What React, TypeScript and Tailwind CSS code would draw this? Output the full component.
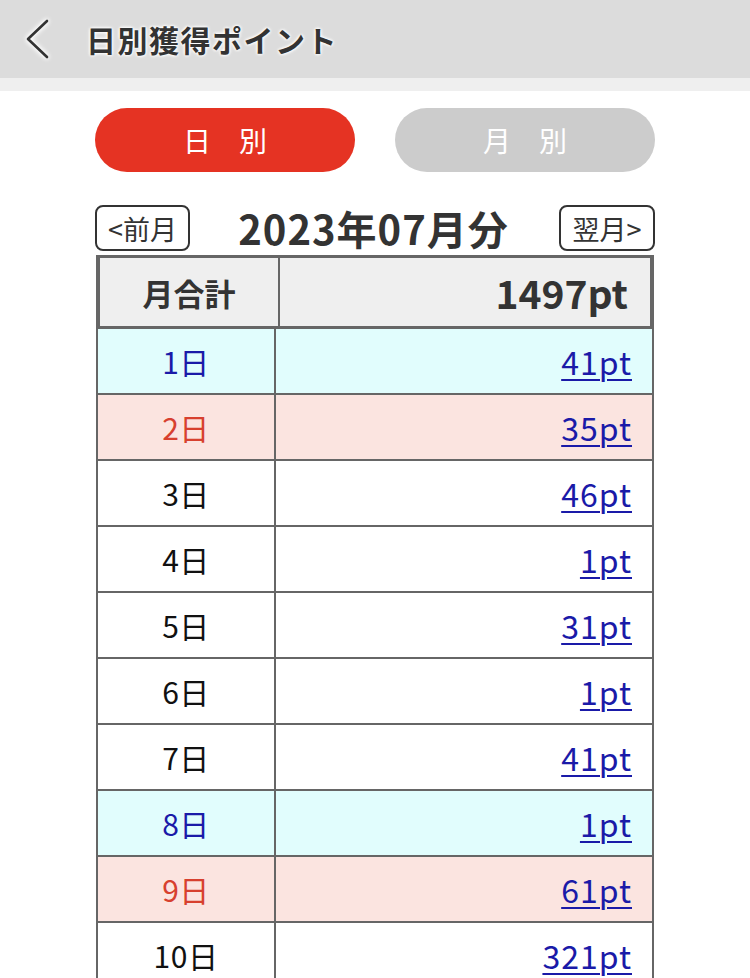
import React from "react";

const rows: { d: string; v: string; t: "blue" | "red" | "normal" }[] = [
  { d: "1日", v: "41pt", t: "blue" },
  { d: "2日", v: "35pt", t: "red" },
  { d: "3日", v: "46pt", t: "normal" },
  { d: "4日", v: "1pt", t: "normal" },
  { d: "5日", v: "31pt", t: "normal" },
  { d: "6日", v: "1pt", t: "normal" },
  { d: "7日", v: "41pt", t: "normal" },
  { d: "8日", v: "1pt", t: "blue" },
  { d: "9日", v: "61pt", t: "red" },
  { d: "10日", v: "321pt", t: "normal" },
];

export default function App() {
  const font = { fontFamily: '"Noto Sans CJK JP", "Noto Sans", sans-serif' };
  return (
    <div className="w-[750px] h-[978px] overflow-hidden bg-white" style={font}>
      <div className="h-[78px] bg-[#dcdcdc] flex items-center">
        <svg width="40" height="50" viewBox="0 0 40 50" className="ml-[16px] mt-[2px]" style={{ filter: "drop-shadow(0 0 2px #fff) drop-shadow(0 0 2px #fff)" }}>
          <path d="M31 6 L12 24 L31 42" fill="none" stroke="#333" strokeWidth="2.6" strokeLinecap="round" strokeLinejoin="round" />
        </svg>
        <div
          className="ml-[30px] text-[30px] font-bold text-[#333] leading-none tracking-[1.5px]"
          style={{ textShadow: "0 0 3px #fff, 0 0 3px #fff, 0 0 4px #fff" }}
        >
          日別獲得ポイント
        </div>
      </div>
      <div className="h-[13px] bg-[#efefef]" />
      <div className="flex justify-between px-[95px] pt-[17px]">
        <div className="w-[260px] h-[64px] rounded-full bg-[#e53323] flex items-center justify-center text-white text-[28px] leading-none">
          日　別
        </div>
        <div className="w-[260px] h-[64px] rounded-full bg-[#cccccc] flex items-center justify-center text-white text-[28px] leading-none">
          月　別
        </div>
      </div>
      <div className="flex items-center justify-between px-[95px] mt-[33px] h-[46px]">
        <div className="h-[46px] w-[95px] border-2 border-[#333] rounded-[8px] flex items-center justify-center text-[27px] text-[#333] leading-none">
          &lt;前月
        </div>
        <div className="text-[40px] font-bold text-[#333] leading-none tracking-[1px] -ml-[2px]">2023年07月分</div>
        <div className="h-[46px] w-[96px] border-2 border-[#333] rounded-[8px] flex items-center justify-center text-[27px] text-[#333] leading-none">
          翌月&gt;
        </div>
      </div>
      <div className="ml-[96px] w-[558px] mt-[4px] border-x-2 border-[#666]">
        <div className="grid grid-cols-[180px_1fr] h-[74px] border-y-[3px] border-[#666] bg-[#efefef] -mx-[1px] border-x-[3px]">
          <div className="border-r-2 border-[#666] flex items-center justify-center text-[31px] font-bold text-[#333] leading-none">
            月合計
          </div>
          <div className="flex items-center justify-end pr-[22px] text-[39px] font-bold text-[#333] leading-none">1497pt</div>
        </div>
        {rows.map((r) => {
          const bg = r.t === "blue" ? "bg-[#e1fdfd]" : r.t === "red" ? "bg-[#fbe4e0]" : "bg-white";
          const tc = r.t === "blue" ? "text-[#1a1aa8]" : r.t === "red" ? "text-[#d7402f]" : "text-[#111]";
          return (
            <div key={r.d} className={`grid grid-cols-[178px_1fr] h-[66px] border-b-2 border-[#666] ${bg}`}>
              <div className={`border-r-2 border-[#666] flex items-center justify-center text-[30px] tracking-[0.5px] leading-none ${tc}`}>{r.d}</div>
              <div className="flex items-center justify-end pr-[20px]">
                <span className="text-[32px] leading-none tracking-[1px] text-[#1a1aa8] underline underline-offset-[4px] decoration-[2px]">{r.v}</span>
              </div>
            </div>
          );
        })}
      </div>
    </div>
  );
}
